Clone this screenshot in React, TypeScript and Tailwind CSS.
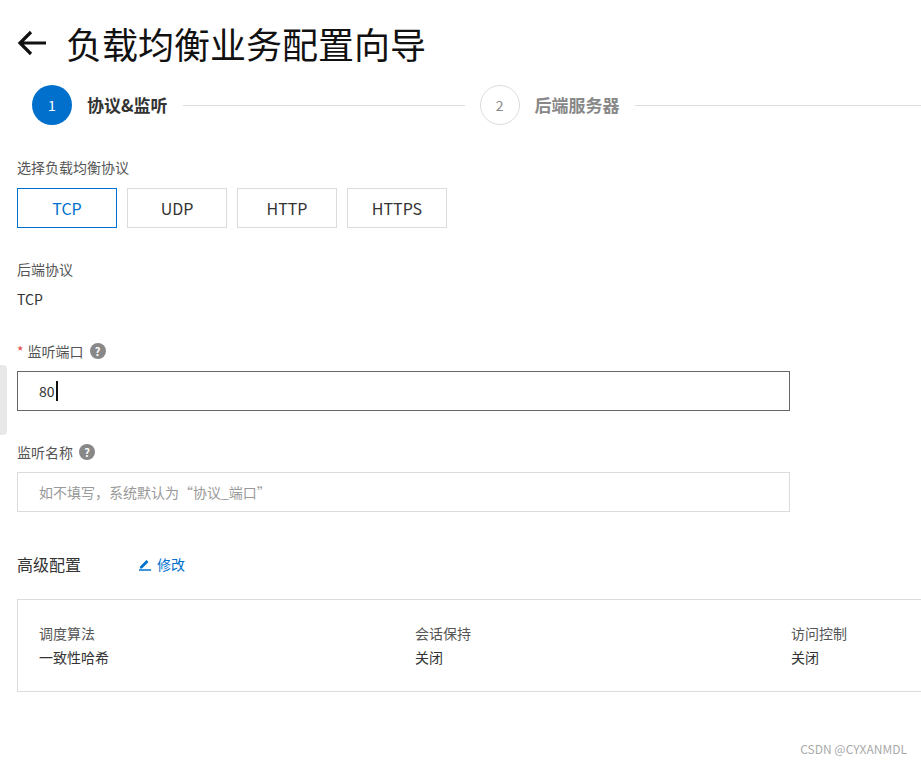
export default function App() {
  const font = { fontFamily: '"Noto Sans CJK SC", "Noto Sans", sans-serif' }
  return (
    <div className="relative h-[766px] w-[921px] overflow-hidden bg-white text-[#333]" style={font}>
      {/* left edge tab */}
      <div className="absolute left-0 top-[365px] h-[70px] w-[7px] rounded-r bg-[#e8e8e8]" />

      <div className="flex items-center pl-[16px] pt-[19px]">
        <svg width="32" height="28" viewBox="0 0 32 28" className="mr-[18px]">
          <path d="M30 14H4M15 3L4 14l11 11" stroke="#111" strokeWidth="3.2" fill="none" />
        </svg>
        <h1 className="text-[36px] leading-[48px] text-[#111]">负载均衡业务配置向导</h1>
      </div>

      <div className="mt-[18px] flex items-center pl-[32px]">
        <div className="flex h-[40px] w-[40px] items-center justify-center rounded-full bg-[#0070cc] text-[14px] text-white">1</div>
        <span className="ml-[15px] text-[17px] font-bold text-[#333]">协议&amp;监听</span>
        <div className="ml-[15px] h-px w-[282px] bg-[#dcdcdc]" />
        <div className="ml-[15px] flex h-[40px] w-[40px] items-center justify-center rounded-full border border-[#dcdcdc] text-[14px] text-[#888]">2</div>
        <span className="ml-[15px] text-[17px] font-bold text-[#888]">后端服务器</span>
        <div className="ml-[15px] h-px flex-1 bg-[#dcdcdc]" />
      </div>

      <div className="pl-[17px]">
        <div className="mt-[32px] text-[14px] leading-[20px] text-[#555]">选择负载均衡协议</div>
        <div className="mt-[11px] flex gap-[10px]">
          {["TCP", "UDP", "HTTP", "HTTPS"].map((p, i) => (
            <div
              key={p}
              className={
                i === 0
                  ? "flex h-[40px] w-[100px] items-center justify-center border border-[#0070cc] text-[16px] text-[#0070cc]"
                  : "flex h-[40px] w-[100px] items-center justify-center border border-[#dcdcdc] text-[16px] text-[#333]"
              }
            >
              {p}
            </div>
          ))}
        </div>

        <div className="mt-[31px] text-[14px] leading-[20px] text-[#555]">后端协议</div>
        <div className="mt-[10px] text-[14px] leading-[20px] text-[#333]">TCP</div>

        <div className="mt-[32px] flex items-center text-[14px] leading-[20px] text-[#555]">
          <span className="mr-[4px] text-[#e54545]">*</span>监听端口
          <Help />
        </div>
        <div className="mt-[10px] flex h-[40px] w-[773px] items-center border border-[#666] pl-[21px] text-[14px] text-[#333]">
          80<span className="ml-px h-[20px] w-[2px] bg-[#111]" />
        </div>

        <div className="mt-[31px] flex items-center text-[14px] leading-[20px] text-[#555]">
          监听名称
          <Help />
        </div>
        <div className="mt-[10px] flex h-[40px] w-[773px] items-center border border-[#dcdcdc] pl-[21px] text-[14px] text-[#999]">
          如不填写，系统默认为“协议_端口”
        </div>

        <div className="mt-[40px] flex items-center">
          <span className="text-[16px] leading-[24px] text-[#333]">高级配置</span>
          <span className="ml-[57px] flex items-center text-[14px] text-[#0070cc]">
            <svg width="14" height="14" viewBox="0 0 14 14" className="mr-[5px]">
              <path d="M2 9.5L8.5 3l2 2L4 11.5H2z" fill="#0070cc" />
              <path d="M1 13h12" stroke="#0070cc" strokeWidth="1.5" />
            </svg>
            修改
          </span>
        </div>

        <div className="mt-[23px] flex h-[93px] w-[920px] border border-r-0 border-[#dcdcdc] pl-[21px] pt-[23px] text-[14px] leading-[20px]">
          {[["调度算法", "一致性哈希"], ["会话保持", "关闭"], ["访问控制", "关闭"]].map(([k, v]) => (
            <div key={k} className="w-[376px] shrink-0">
              <div className="text-[#555]">{k}</div>
              <div className="mt-[4px] text-[#333]">{v}</div>
            </div>
          ))}
        </div>
      </div>

      <div className="absolute bottom-[8px] right-[14px] text-[12px] text-[#aaa]">CSDN @CYXANMDL</div>
    </div>
  )
}

function Help() {
  return (
    <span className="ml-[6px] flex h-[16px] w-[16px] items-center justify-center rounded-full bg-[#888] text-[11px] font-bold leading-none text-white">
      ?
    </span>
  )
}
